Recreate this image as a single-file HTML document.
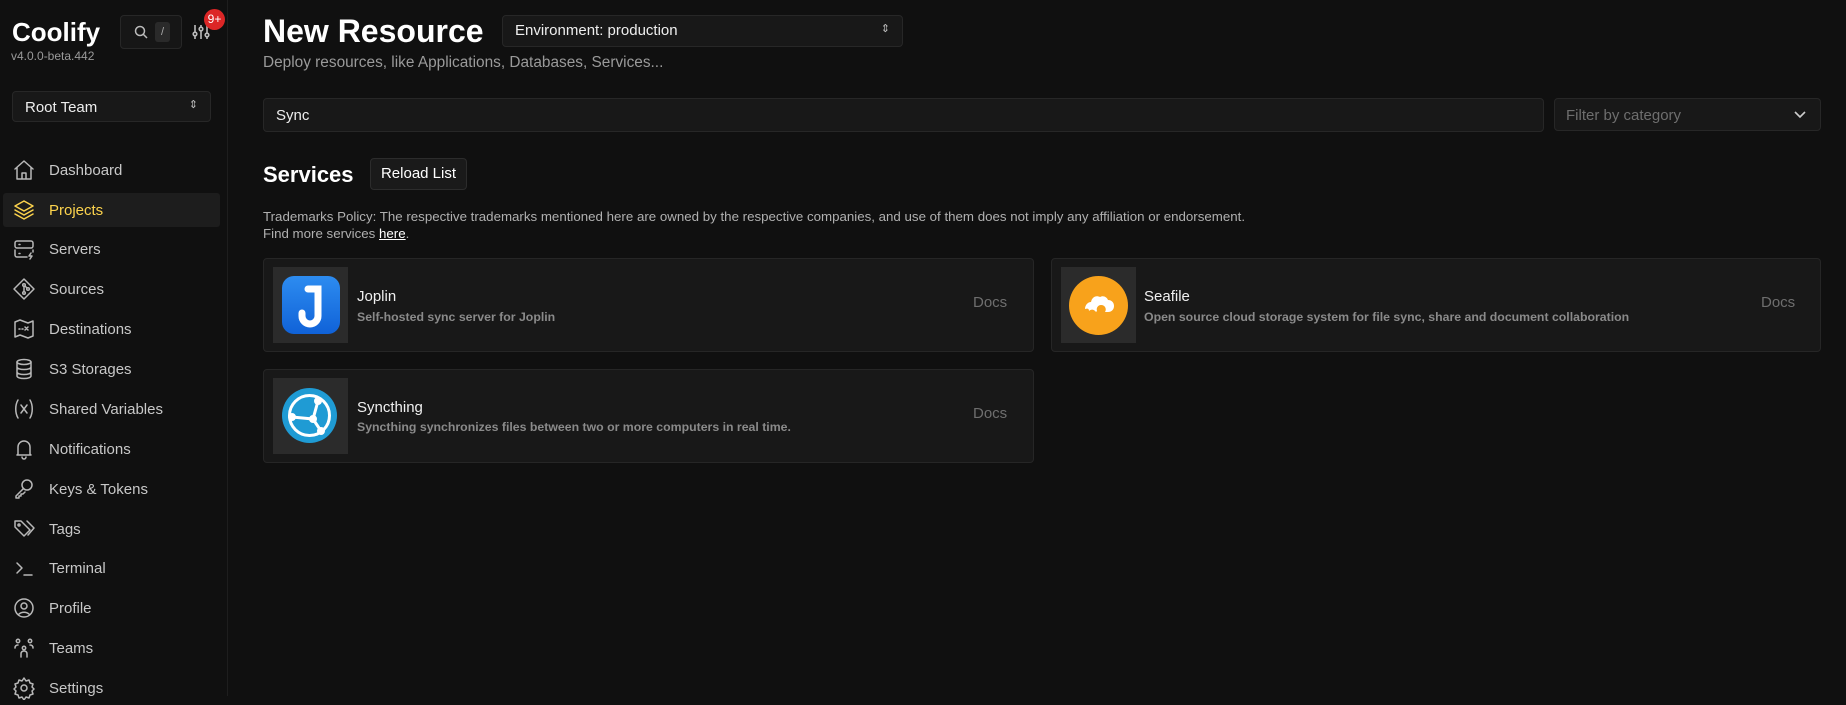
<!DOCTYPE html>
<html><head><meta charset="utf-8"><style>
*{box-sizing:border-box;margin:0;padding:0}
body{width:1846px;height:696px;overflow:hidden;background:#101010;font-family:"Liberation Sans",sans-serif;color:#e5e5e5;position:relative}
.abs{position:absolute}
.side{position:absolute;left:0;top:0;width:228px;height:696px;background:#101010;border-right:1px solid #1e1e1e}
.nav{position:absolute;left:0;width:228px;height:34px;display:flex;align-items:center;font-size:15px;color:#c8c8c8}
.nav svg{position:absolute;left:12px;width:24px;height:24px;fill:none;stroke:#b8b8b8;stroke-width:1.5;stroke-linecap:round;stroke-linejoin:round}
.nav span{position:absolute;left:49px}
.box{position:absolute;background:#181818;border:1px solid #272727;border-radius:4px}
.card{position:absolute;background:#181818;border:1px solid #262626;border-radius:4px}
.ic{position:absolute;background:#2b2b2b;width:75px;height:76px;top:8px;left:9px}
.ct{position:absolute;left:93px;font-size:15px;color:#f0f0f0}
.cd{position:absolute;left:93px;font-size:12.3px;font-weight:bold;color:#8a8a8a}
.docs{position:absolute;font-size:15px;color:#6e6e6e}
</style></head><body>
<div class="side">
 <div class="abs" style="left:12px;top:17px;font-size:26px;font-weight:bold;color:#fff">Coolify</div>
 <div class="abs" style="left:11px;top:49px;font-size:12px;color:#9a9a9a">v4.0.0-beta.442</div>
 <div class="box" style="left:120px;top:15px;width:62px;height:34px;background:#161616"></div>
 <svg class="abs" style="left:133px;top:24px" width="16" height="16" viewBox="0 0 16 16" fill="none" stroke="#bbb" stroke-width="1.5"><circle cx="7" cy="7" r="4.5"/><path d="M10.5 10.5L14 14"/></svg>
 <div class="abs" style="left:155px;top:22px;width:15px;height:20px;background:#2a2a2a;border-radius:3px;font-size:11px;color:#aaa;text-align:center;line-height:20px">/</div>
 <svg class="abs" style="left:191px;top:22px" width="20" height="20" viewBox="0 0 20 20" fill="none" stroke="#bbb" stroke-width="1.6"><path d="M4 3v14M10 3v14M16 3v14"/><circle cx="4" cy="12" r="1.8" fill="#101010"/><circle cx="10" cy="7" r="1.8" fill="#101010"/><circle cx="16" cy="13" r="1.8" fill="#101010"/></svg>
 <div class="abs" style="left:204px;top:9px;width:21px;height:21px;border-radius:50%;background:#dc2626;color:#fff;font-size:12px;text-align:center;line-height:21px">9+</div>
 <div class="box" style="left:12px;top:91px;width:199px;height:31px;font-size:15px;color:#eee;padding:7px 0 0 12px">Root Team<span style="position:absolute;right:12px;top:6px;font-size:11px;color:#bbb">&#8661;</span></div>
 <div class="nav" style="top:153px"><svg viewBox="0 0 24 24"><path d="M3 11l9-8 9 8M5 9.5V21h14V9.5M10 21v-6h4v6"/></svg><span>Dashboard</span></div>
 <div class="nav" style="top:193px;left:3px;width:217px;background:#1d1d1d;border-radius:3px;color:#fcd34d"><svg viewBox="0 0 24 24" style="stroke:#fcd34d;left:9px"><path d="M12 3l9 5-9 5-9-5z M3 12l9 5 9-5 M3 16l9 5 9-5"/></svg><span style="left:46px">Projects</span></div>
 <div class="nav" style="top:232px"><svg viewBox="0 0 24 24"><rect x="3" y="4" width="18" height="7" rx="2"/><path d="M3 13v5a2 2 0 002 2h10M21 13v2M7 7.5h1M7 16.5h1M19 16l-2 3h3l-2 3"/></svg><span>Servers</span></div>
 <div class="nav" style="top:272px"><svg viewBox="0 0 24 24"><path d="M12 2l10 10-10 10L2 12z"/><circle cx="12" cy="8" r="1.3"/><circle cx="12" cy="16" r="1.3"/><circle cx="16" cy="12" r="1.3"/><path d="M12 9.5v5M13 9l2 2"/></svg><span>Sources</span></div>
 <div class="nav" style="top:312px"><svg viewBox="0 0 24 24"><path d="M3 5l5-2 8 3 5-2v15l-5 2-8-3-5 2z"/><path d="M13 10l3 3M16 10l-3 3M7 12h1M10 12h1"/></svg><span>Destinations</span></div>
 <div class="nav" style="top:352px"><svg viewBox="0 0 24 24"><ellipse cx="12" cy="5" rx="7" ry="2.5"/><path d="M5 5v14c0 1.4 3 2.5 7 2.5s7-1.1 7-2.5V5M5 10c0 1.4 3 2.5 7 2.5s7-1.1 7-2.5M5 15c0 1.4 3 2.5 7 2.5s7-1.1 7-2.5"/></svg><span>S3 Storages</span></div>
 <div class="nav" style="top:392px"><svg viewBox="0 0 24 24"><path d="M6 3c-3 5-3 13 0 18M18 3c3 5 3 13 0 18M9 8l6 8M15 8l-6 8"/></svg><span>Shared Variables</span></div>
 <div class="nav" style="top:432px"><svg viewBox="0 0 24 24"><path d="M6 17V10a6 6 0 0112 0v7l1 1H5zM10 20a2 2 0 004 0"/></svg><span>Notifications</span></div>
 <div class="nav" style="top:472px"><svg viewBox="0 0 24 24"><circle cx="15" cy="8" r="5"/><path d="M11.5 11.5L4 19v2h3v-2h2v-2h2l2-2"/></svg><span>Keys &amp; Tokens</span></div>
 <div class="nav" style="top:512px"><svg viewBox="0 0 24 24"><path d="M3 4v6l9 9 6-6-9-9zM15 4l7 7-6 7"/><circle cx="7" cy="8" r="1"/></svg><span>Tags</span></div>
 <div class="nav" style="top:551px"><svg viewBox="0 0 24 24"><path d="M5 7l5 5-5 5M12 19h8"/></svg><span>Terminal</span></div>
 <div class="nav" style="top:591px"><svg viewBox="0 0 24 24"><circle cx="12" cy="12" r="9"/><circle cx="12" cy="10" r="3"/><path d="M6.5 18.5c3-3 8-3 11 0"/></svg><span>Profile</span></div>
 <div class="nav" style="top:631px"><svg viewBox="0 0 24 24"><circle cx="6" cy="5" r="1.7"/><circle cx="18" cy="5" r="1.7"/><circle cx="12" cy="12" r="1.7"/><path d="M3 12c0-2 1-3 3-3M21 12c0-2-1-3-3-3M9 21v-3c0-2 1-3 3-3s3 1 3 3v3"/></svg><span>Teams</span></div>
 <div class="nav" style="top:671px"><svg viewBox="0 0 24 24"><circle cx="12" cy="12" r="3"/><path d="M12 2l2 3 3-1 1 3 3 1-1 3 2 2-2 2 1 3-3 1-1 3-3-1-2 3-2-3-3 1-1-3-3-1 1-3-2-2 2-2-1-3 3-1 1-3 3 1z"/></svg><span>Settings</span></div>
</div>

<div class="abs" style="left:263px;top:13px;font-size:32px;font-weight:bold;color:#fff">New Resource</div>
<div class="box" style="left:502px;top:15px;width:401px;height:32px;font-size:15px;color:#eee;padding:6px 0 0 12px">Environment: production<span style="position:absolute;right:12px;top:6px;font-size:11px;color:#bbb">&#8661;</span></div>
<div class="abs" style="left:263px;top:54px;font-size:15.4px;color:#9a9a9a">Deploy resources, like Applications, Databases, Services...</div>
<div class="box" style="left:263px;top:98px;width:1281px;height:34px;font-size:15px;color:#eee;padding:8px 0 0 12px">Sync</div>
<div class="box" style="left:1554px;top:98px;width:267px;height:33px;font-size:15px;color:#6e6e6e;padding:8px 0 0 11px">Filter by category
 <svg style="position:absolute;right:13px;top:11px" width="14" height="10" viewBox="0 0 14 10" fill="none" stroke="#ccc" stroke-width="1.6"><path d="M2 2l5 5 5-5"/></svg></div>
<div class="abs" style="left:263px;top:162px;font-size:22px;font-weight:bold;color:#fff">Services</div>
<div class="box" style="left:370px;top:158px;width:97px;height:32px;background:#1a1a1a;border-color:#2c2c2c;font-size:15px;color:#fff;text-align:center;line-height:30px">Reload List</div>
<div class="abs" style="left:263px;top:208px;font-size:13.3px;color:#b0b0b0;line-height:17px">Trademarks Policy: The respective trademarks mentioned here are owned by the respective companies, and use of them does not imply any affiliation or endorsement.<br>Find more services <span style="color:#fff;text-decoration:underline">here</span>.</div>

<div class="card" style="left:263px;top:258px;width:771px;height:94px">
 <div class="ic"><div style="position:absolute;left:9px;top:9px;width:58px;height:58px;border-radius:12px;background:linear-gradient(#2d8cf0,#1062d8)"></div>
 <svg style="position:absolute;left:9px;top:9px" width="58" height="58" viewBox="0 0 58 58" fill="none" stroke="#fff" stroke-width="7" stroke-linecap="round"><path d="M26 13h10v27a8 8 0 01-16 0v-3"/></svg></div>
 <div class="ct" style="top:29px">Joplin</div><div class="cd" style="top:51px">Self-hosted sync server for Joplin</div>
 <div class="docs" style="left:709px;top:35px">Docs</div>
</div>
<div class="card" style="left:1051px;top:258px;width:770px;height:94px">
 <div class="ic"><div style="position:absolute;left:8px;top:9px;width:59px;height:59px;border-radius:50%;background:#f8a21b"></div>
 <svg style="position:absolute;left:8px;top:9px" width="59" height="59" viewBox="0 0 59 59" fill="#fff"><path d="M16 33c0-4 3-7 6-7 1-5 5-7 9-5 3-2 7 0 8 3 4 0 6 3 6 6s-2 6-6 6h-3c2-3 0-7-4-7-3 0-5 3-4 6l-1 1c-2-3-5-3-7-1 0-2-1-3-4-2z"/></svg></div>
 <div class="ct" style="top:29px;left:92px">Seafile</div><div class="cd" style="top:51px;left:92px">Open source cloud storage system for file sync, share and document collaboration</div>
 <div class="docs" style="left:709px;top:35px">Docs</div>
</div>
<div class="card" style="left:263px;top:369px;width:771px;height:94px">
 <div class="ic"><div style="position:absolute;left:9px;top:10px;width:55px;height:55px;border-radius:50%;background:#1f9bd4"></div>
 <svg style="position:absolute;left:9px;top:10px" width="55" height="55" viewBox="0 0 55 55" fill="none" stroke="#fff" stroke-width="3"><circle cx="27.5" cy="27.5" r="20"/><path d="M36 13L31 31 10 29M31 31l8 12" /><circle cx="36" cy="13" r="2.5" fill="#fff"/><circle cx="31" cy="31" r="2.5" fill="#fff"/><circle cx="10" cy="29" r="2.5" fill="#fff"/><circle cx="39" cy="43" r="2.5" fill="#fff"/></svg></div>
 <div class="ct" style="top:29px">Syncthing</div><div class="cd" style="top:50px">Syncthing synchronizes files between two or more computers in real time.</div>
 <div class="docs" style="left:709px;top:35px">Docs</div>
</div>
</body></html>
